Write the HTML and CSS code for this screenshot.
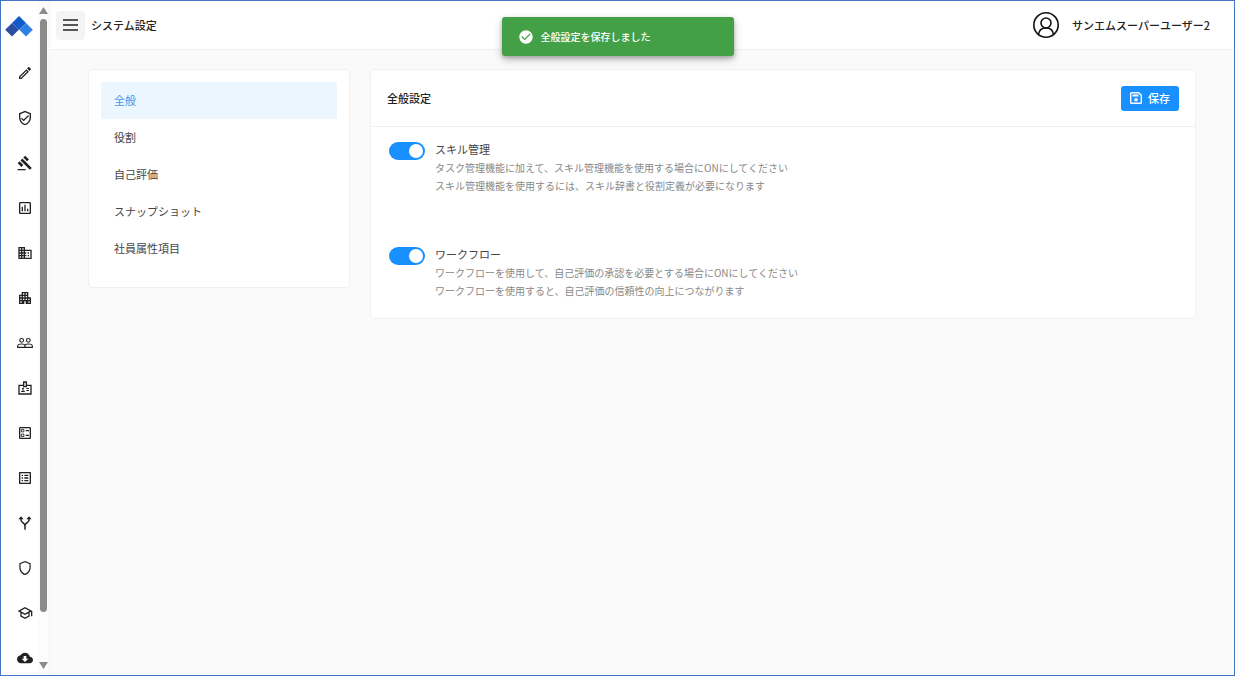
FILE: index.html
```html
<!DOCTYPE html>
<html lang="ja">
<head>
<meta charset="utf-8">
<title>システム設定</title>
<link rel="stylesheet" href="styles.css">
</head>
<body>
<div class="app">
  <aside class="sidebar">
    <div class="rail">
      <a class="logo" href="#" aria-label="ホーム">
        <svg width="28" height="22" viewBox="0 0 28 22"><path fill="#2b4ea2" d="M7 8l7 6.500-7 7-6.800-6.800z"/><path fill="#2f80e4" d="M21 8l6.800 6.700L21 21.500l-7-7z"/><path fill="#1259c9" d="M14 1l7 7-7 6.500L7 8z"/></svg>
      </a>
      <nav class="rail-nav" aria-label="メイン">
        <a href="#" aria-label="編集"><svg viewBox="0 0 24 24"><path d="M14.060 9.020l.92.92L5.920 19H5v-.92l9.060-9.060M17.660 3c-.25 0-.51.1-.7.29l-1.830 1.830 3.750 3.750 1.830-1.830c.39-.39.39-1.020 0-1.410l-2.340-2.340c-.2-.2-.45-.29-.71-.29zm-3.600 3.190L3 17.250V21h3.750L17.810 9.940l-3.750-3.750z"/></svg></a>
        <a href="#" aria-label="承認"><svg viewBox="0 0 24 24"><path d="M12 1L3 5v6c0 5.550 3.840 10.740 9 12 5.160-1.260 9-6.450 9-12V5l-9-4zm7 10c0 4.520-2.980 8.690-7 9.930-4.020-1.240-7-5.410-7-9.930V6.300l7-3.110 7 3.110V11zm-11.590.59L6 13l4 4 8-8-1.410-1.420L10 14.170z"/></svg></a>
        <a href="#" aria-label="評価"><svg viewBox="0 0 24 24"><path d="M1 21h12v2H1zM5.245 8.070l2.830-2.827 14.140 14.142-2.828 2.828zM12.317 1l5.657 5.656-2.830 2.830-5.654-5.660zM3.825 9.485l5.657 5.657-2.828 2.828-5.657-5.657z"/></svg></a>
        <a href="#" aria-label="レポート"><svg viewBox="0 0 24 24"><path d="M9 17H7v-7h2v7zm4 0h-2V7h2v10zm4 0h-2v-4h2v4zm2 2H5V5h14v14zm0-16H5c-1.100 0-2 .9-2 2v14c0 1.100.9 2 2 2h14c1.100 0 2-.9 2-2V5c0-1.100-.9-2-2-2z"/></svg></a>
        <a href="#" aria-label="会社"><svg viewBox="0 0 24 24"><path d="M12 7V3H2v18h20V7H12zM6 19H4v-2h2v2zm0-4H4v-2h2v2zm0-4H4V9h2v2zm0-4H4V5h2v2zm4 12H8v-2h2v2zm0-4H8v-2h2v2zm0-4H8V9h2v2zm0-4H8V5h2v2zm10 12h-8v-2h2v-2h-2v-2h2v-2h-2V9h8v10zm-2-8h-2v2h2v-2zm0 4h-2v2h2v-2z"/></svg></a>
        <a href="#" aria-label="部署"><svg viewBox="0 0 24 24"><path d="M17 11V3H7v4H3v14h8v-4h2v4h8V11h-4zM7 19H5v-2h2v2zm0-4H5v-2h2v2zm0-4H5V9h2v2zm4 4H9v-2h2v2zm0-4H9V9h2v2zm0-4H9V5h2v2zm4 8h-2v-2h2v2zm0-4h-2V9h2v2zm0-4h-2V5h2v2zm4 12h-2v-2h2v2zm0-4h-2v-2h2v2z"/></svg></a>
        <a href="#" aria-label="グループ"><svg viewBox="0 0 24 24"><g fill="none" stroke="currentColor" stroke-width="1.700"><circle cx="7" cy="8" r="2.800"/><circle cx="17" cy="8" r="2.800"/><path d="M1 18.500v-2c0-2 3-3 6-3s5 1 5 3v2zM12 18.500h11v-2c0-2-3-3-6-3-2 0-4 .5-5 1.600"/></g></svg></a>
        <a href="#" aria-label="社員"><svg viewBox="0 0 24 24"><path fill="none" stroke="currentColor" stroke-width="2" d="M10 8H3v13h18V8h-7M10 3h4v7h-4z"/><circle cx="9" cy="13" r="1.500"/><path d="M6 18c0-3 6-3 6 0zM14 12h4v1.500h-4zM14 15h4v1.500h-4z"/></svg></a>
        <a href="#" aria-label="項目"><svg viewBox="0 0 24 24"><path fill="none" stroke="currentColor" stroke-width="2" d="M5 4h14q1 0 1 1v14q0 1-1 1H5q-1 0-1-1V5q0-1 1-1z"/><path d="M13 7.500h5v2h-5zM13 14.500h5v2h-5z"/><path fill="none" stroke="currentColor" stroke-width="1.300" d="M6.700 6.700h3.600v3.600H6.700zM6.700 13.700h3.600v3.600H6.700z"/></svg></a>
        <a href="#" aria-label="一覧"><svg viewBox="0 0 24 24"><path d="M19 5v14H5V5h14m1.100-2H3.900c-.5 0-.9.4-.9.9v16.200c0 .4.4.9.9.9h16.200c.4 0 .9-.5.9-.9V3.900c0-.5-.5-.9-.9-.9zM11 7h6v2h-6V7zm0 4h6v2h-6v-2zm0 4h6v2h-6zM7 7h2v2H7zm0 4h2v2H7zm0 4h2v2H7z"/></svg></a>
        <a href="#" aria-label="ワークフロー"><svg viewBox="0 0 24 24"><path d="M6 2l4 4.500H2zM18 2l4 4.500h-8z"/><path fill="none" stroke="currentColor" stroke-width="2.200" d="M6 6v2c0 3 6 4 6 8v6M18 6v2c0 3-6 4-6 8"/></svg></a>
        <a href="#" aria-label="権限"><svg viewBox="0 0 24 24"><path d="M12 1.500L3.500 4.700v6.390c0 5.050 3.510 10.260 8.500 11.410 4.990-1.150 8.500-6.360 8.500-11.410V4.700L12 1.500zm6.700 9.590c0 4-2.850 8.200-6.700 9.430-3.850-1.230-6.700-5.420-6.700-9.430V6L12 3.400 18.700 6v5.090z"/></svg></a>
        <a href="#" aria-label="スキル"><svg viewBox="0 0 24 24"><path d="M12 3L1 9l4 2.180v6L12 21l7-3.820v-6l2-1.090V17h2V9L12 3zm6.820 6L12 12.720 5.180 9 12 5.280 18.820 9zM17 15.990l-5 2.730-5-2.730v-3.720L12 15l5-2.730v3.720z"/></svg></a>
        <a href="#" aria-label="ダウンロード"><svg viewBox="0 0 24 24"><path d="M19.350 10.040C18.670 6.590 15.640 4 12 4 9.110 4 6.600 5.640 5.350 8.040 2.340 8.360 0 10.910 0 14c0 3.310 2.690 6 6 6h13c2.760 0 5-2.240 5-5 0-2.640-2.050-4.780-4.650-4.960zM17 13l-5 5-5-5h3V9h4v4h3z"/></svg></a>
      </nav>
    </div>
    <div class="scrollbar" aria-hidden="true">
      <svg width="9" height="7" viewBox="0 0 9 7"><path d="M4.500 0L9 7H0z"/></svg>
      <div class="track"><div class="thumb"></div></div>
      <svg width="9" height="7" viewBox="0 0 9 7"><path d="M0 0h9L4.500 7z"/></svg>
    </div>
  </aside>

  <div class="page">
    <header class="topbar">
      <button class="menu-button" type="button" aria-label="メニュー">
        <svg width="15" height="12" viewBox="0 0 15 12"><path d="M0 1h15M0 6h15M0 11h15" stroke="currentColor" stroke-width="1.500"/></svg>
      </button>
      <h1 class="heading">システム設定</h1>
      <div class="user">
        <svg width="28" height="28" viewBox="0 0 28 28" fill="none" stroke="#111" stroke-width="1.600"><circle cx="14" cy="14" r="12.200"/><circle cx="14" cy="12" r="5"/><path d="M6.500 23.500c.5-4 3-6.500 7.500-6.500s7 2.500 7.500 6.500"/></svg>
        <span>サンエムスーパーユーザー2</span>
      </div>
    </header>

    <main class="content">
      <nav class="card side-menu" aria-label="設定">
        <a class="active" href="#" aria-current="page">全般</a>
        <a href="#">役割</a>
        <a href="#">自己評価</a>
        <a href="#">スナップショット</a>
        <a href="#">社員属性項目</a>
      </nav>

      <section class="card settings">
        <div class="card-head">
          <h2 class="heading">全般設定</h2>
          <button class="save" type="button">
            <svg width="12" height="12" viewBox="0 0 12 12"><path fill="none" stroke="#fff" stroke-width="1.400" d="M1.500.7h7.200l2.600 2.600v7.200q0 .8-.8.8h-9q-.8 0-.8-.8v-9q0-.8.8-.8z"/><path fill="#fff" d="M2.500 2.500h6v2h-6z"/><circle cx="6" cy="7.700" r="1.800" fill="#fff"/></svg>
            保存
          </button>
        </div>
        <div class="card-body">
          <div class="option">
            <input class="switch" type="checkbox" role="switch" id="skill" checked>
            <div>
              <label for="skill">スキル管理</label>
              <p>タスク管理機能に加えて、スキル管理機能を使用する場合にONにしてください<br>スキル管理機能を使用するには、スキル辞書と役割定義が必要になります</p>
            </div>
          </div>
          <div class="option">
            <input class="switch" type="checkbox" role="switch" id="workflow" checked>
            <div>
              <label for="workflow">ワークフロー</label>
              <p>ワークフローを使用して、自己評価の承認を必要とする場合にONにしてください<br>ワークフローを使用すると、自己評価の信頼性の向上につながります</p>
            </div>
          </div>
        </div>
      </section>
    </main>
  </div>

  <div class="toast" role="status">
    <svg width="16" height="16" viewBox="0 0 24 24"><path fill="#fff" d="M12 2C6.480 2 2 6.480 2 12s4.480 10 10 10 10-4.480 10-10S17.520 2 12 2zm-2 15l-5-5 1.410-1.410L10 14.170l7.590-7.590L19 8l-9 9z"/></svg>
    全般設定を保存しました
  </div>
</div>
</body>
</html>
```
FILE: styles.css
```css
* {
  box-sizing: border-box;
}

body {
  margin: 0;
  font: 11px/18px "Noto Sans CJK JP", sans-serif;
  color: #444;
  background: #fafafa;
}

a {
  color: inherit;
  text-decoration: none;
}

button {
  border: 0;
  font: inherit;
  cursor: pointer;
}

svg {
  display: block;
  flex: none;
}

.app {
  display: flex;
  height: 100vh;
  border: 1px solid #4472c4;
  overflow: hidden;
}

.sidebar {
  display: flex;
  flex: none;
  background: #fff;
  border-right: 1px solid #f3f3f3;
}

.rail {
  width: 37px;
  overflow: hidden;
}

.logo {
  display: flex;
  align-items: center;
  height: 49px;
  padding-left: 4px;
}

.rail-nav a {
  display: flex;
  align-items: center;
  justify-content: center;
  height: 45px;
  padding-left: 11px;
  color: #222;
}

.rail-nav svg {
  width: 16px;
  height: 16px;
  fill: currentColor;
}

.scrollbar {
  display: flex;
  flex-direction: column;
  align-items: center;
  gap: 5px;
  width: 11px;
  padding: 6px 0;
  background: #fcfcfc;
}

.scrollbar svg {
  fill: #8b8b8b;
}

.track {
  flex: 1;
}

.thumb {
  width: 7px;
  height: 93%;
  border-radius: 4px;
  background: #8b8b8b;
}

.page {
  flex: 1;
  min-width: 0;
}

.topbar {
  display: flex;
  align-items: center;
  height: 49px;
  padding: 0 24px 0 6px;
  background: #fff;
  border-bottom: 1px solid #f0f0f0;
}

.menu-button {
  display: flex;
  align-items: center;
  justify-content: center;
  width: 29px;
  height: 29px;
  margin-right: 6px;
  padding: 0;
  border-radius: 4px;
  color: #222;
  background: #f4f4f4;
}

.heading {
  margin: 0;
  font-size: 11px;
  font-weight: 500;
  color: #222;
}

.user {
  display: flex;
  align-items: center;
  gap: 12px;
  margin-left: auto;
  font-weight: 500;
  color: #222;
}

.content {
  display: flex;
  align-items: flex-start;
  gap: 20px;
  padding: 19px 38px;
}

.card {
  background: #fff;
  border: 1px solid #f0f0f2;
  border-radius: 4px;
}

.side-menu {
  flex: none;
  width: 262px;
  padding: 12px 12px 20px;
}

.side-menu a {
  display: block;
  padding: 9px 13px 10px;
}

.side-menu .active {
  color: #4a94ee;
  background: #ebf6ff;
}

.settings {
  flex: 1;
}

.card-head {
  display: flex;
  align-items: center;
  justify-content: space-between;
  height: 57px;
  padding: 0 16px;
  border-bottom: 1px solid #f0f0f2;
}

.save {
  display: flex;
  align-items: center;
  gap: 6px;
  height: 25px;
  padding: 0 9px;
  border-radius: 3px;
  font-weight: 500;
  color: #fff;
  background: #1890ff;
}

.card-body {
  display: grid;
  gap: 49px;
  padding: 12px 18px 18px;
}

.option {
  display: flex;
  align-items: flex-start;
  gap: 10px;
}

.option label {
  display: block;
  line-height: 20px;
}

.option p {
  margin: 0;
  font-size: 10px;
  color: #888;
}

.switch {
  display: flex;
  align-items: center;
  justify-content: flex-end;
  flex: none;
  width: 36px;
  height: 18px;
  margin: 3px 0 0;
  padding: 2px;
  border-radius: 9px;
  background: #1890ff;
  appearance: none;
}

.switch::before {
  content: "";
  width: 14px;
  height: 14px;
  border-radius: 50%;
  background: #fff;
}

.toast {
  position: absolute;
  top: 17px;
  left: 50%;
  display: flex;
  align-items: center;
  gap: 7px;
  width: 232px;
  height: 39px;
  margin-left: -116px;
  padding: 0 16px;
  border-radius: 3px;
  font-size: 10px;
  font-weight: 500;
  color: #fff;
  background: #43a047;
  box-shadow: 0 2px 4px rgba(0, 0, 0, .25), 0 4px 10px rgba(0, 0, 0, .18);
}
```
